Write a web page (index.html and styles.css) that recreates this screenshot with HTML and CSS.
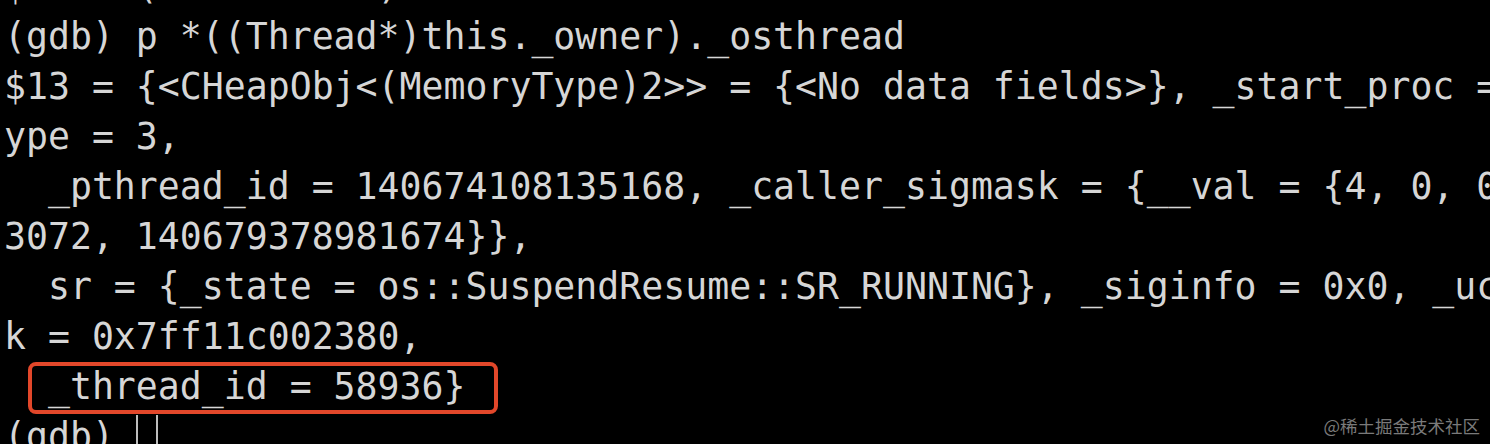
FILE: index.html
```html
<!DOCTYPE html>
<html lang="en">
<head>
<meta charset="utf-8">
<title>gdb</title>
<link rel="stylesheet" href="styles.css">
</head>
<body>
<div class="term">
<div class="line">$12 = (OSThread *) 0x7ff11c001cc0</div>
<div class="line">(gdb) p *((Thread*)this._owner)._osthread</div>
<div class="line">$13 = {&lt;CHeapObj&lt;(MemoryType)2&gt;&gt; = {&lt;No data fields&gt;}, _start_proc = 0x0, _thread_t</div>
<div class="line">ype = 3,</div>
<div class="line">  _pthread_id = 140674108135168, _caller_sigmask = {__val = {4, 0, 0, 0, 0, 0, 0, 0}},</div>
<div class="line">3072, 140679378981674}},</div>
<div class="line">  sr = {_state = os::SuspendResume::SR_RUNNING}, _siginfo = 0x0, _ucontext = 0x0,</div>
<div class="line">k = 0x7ff11c002380,</div>
<div class="line highlight">  _thread_id = 58936}</div>
<div class="line">(gdb) <span class="cursor"></span></div>
</div>
<div class="watermark">@稀土掘金技术社区</div>
</body>
</html>
```
FILE: styles.css
```css
html, body {
  margin: 0;
  padding: 0;
  background: #000;
  overflow: hidden;
  width: 1490px;
  height: 444px;
}
body {
  position: relative;
}
.term {
  margin-top: -38px;
  padding-left: 4px;
  font-family: "DejaVu Sans Mono", monospace;
  font-size: 36.5px;
  line-height: 50px;
  color: #d6d6d6;
}
.line {
  height: 50px;
  white-space: pre;
}
.highlight {
  position: relative;
}
.highlight::after {
  content: "";
  position: absolute;
  left: 24px;
  top: 0;
  width: 470px;
  height: 52px;
  box-sizing: border-box;
  border: 4px solid #e2472a;
  border-radius: 8px;
}
.cursor {
  display: inline-block;
  vertical-align: top;
  box-sizing: border-box;
  width: 22px;
  height: 46px;
  margin-top: 3px;
  border-left: 2px solid #bdbdbd;
  border-right: 2px solid #bdbdbd;
}
.watermark {
  position: absolute;
  right: 10px;
  bottom: 7px;
  font-family: "Noto Sans CJK SC", sans-serif;
  font-size: 17.5px;
  line-height: 22px;
  color: #7a7a7a;
}
```
